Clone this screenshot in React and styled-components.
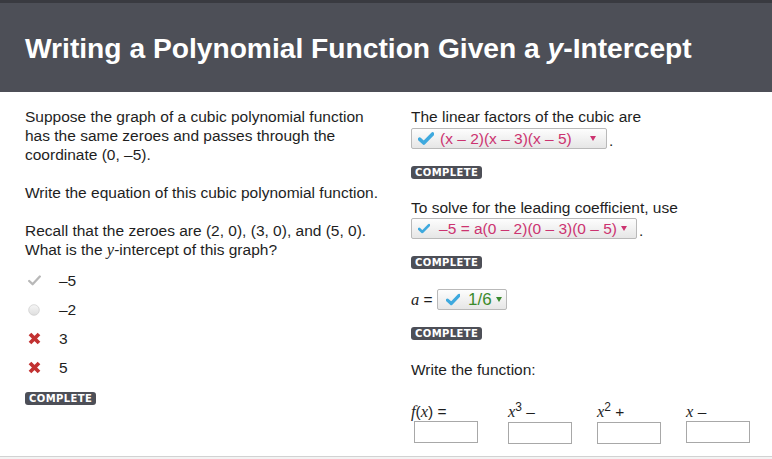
import React from "react";
import styled, { createGlobalStyle } from "styled-components";

const GlobalStyle = createGlobalStyle`
  html, body { margin: 0; padding: 0; background: #fff; }
  body { font-family: "Liberation Sans", Arial, sans-serif; color: #1e1e1e; }
  * { box-sizing: border-box; }
`;

const Page = styled.div`
  width: 772px;
  height: 459px;
  overflow: hidden;
  display: flex;
  flex-direction: column;
  background: #fff;
`;

const Header = styled.header`
  height: 92px;
  flex: none;
  border-top: 3px solid #393a40;
  background: #4d4f57;
  display: flex;
  align-items: center;
  padding-left: 25px;
`;

const Title = styled.h1`
  margin: 0;
  color: #fff;
  font: bold 28.2px/28px "Liberation Sans", Arial, sans-serif;
`;

const Main = styled.main`
  flex: 1;
  display: flex;
  font-size: 15.5px;
  line-height: 19px;
`;

const LeftCol = styled.section`
  width: 411px;
  flex: none;
  padding: 15px 0 0 25px;
`;

const RightCol = styled.section`
  flex: 1;
  padding: 15px 0 0 0;
`;

const Para = styled.p`
  margin: ${(p) => p.$top || 0}px 0 ${(p) => (p.$gap != null ? p.$gap : 19)}px 0;
`;

const MathVar = styled.i`
  font-family: "Liberation Serif", "Times New Roman", serif;
  font-size: 16.5px;
`;

const Options = styled.div`
  margin-top: 7px;
  display: flex;
  flex-direction: column;
`;

const OptionRow = styled.div`
  height: 29px;
  display: flex;
  align-items: center;
`;

const IconSlot = styled.span`
  width: 34px;
  padding-left: 3px;
  display: flex;
  align-items: center;
`;

const Badge = styled.div`
  display: inline-block;
  margin-top: ${(p) => p.$top || 0}px;
  height: 13px;
  padding: 0 4px;
  border-radius: 3px;
  background: #4d4f57;
  color: #fff;
  font: bold 10px/13px "DejaVu Sans", Verdana, sans-serif;
  letter-spacing: 0.4px;
`;

const Block = styled.div`
  margin-top: ${(p) => p.$top || 0}px;
`;

const DropRow = styled.div`
  margin-top: ${(p) => p.$top || 0}px;
  display: flex;
  align-items: flex-end;
`;

const Dropdown = styled.div`
  width: ${(p) => p.$width}px;
  height: 21px;
  display: flex;
  align-items: center;
  padding: 0 ${(p) => p.$padR || 8}px 0 ${(p) => p.$padL || 6}px;
  border: 1px solid #b9b9b9;
  border-radius: 2px;
  background: linear-gradient(#fdfdfd, #e6e6e6);
  color: ${(p) => p.$color};
  font-size: ${(p) => p.$fs || 15.5}px;
  line-height: 19px;
`;

const DropText = styled.span`
  flex: 1;
  margin-left: ${(p) => p.$gap || 7}px;
  white-space: nowrap;
`;

const Caret = styled.span`
  width: 0;
  height: 0;
  border-left: 3px solid transparent;
  border-right: 3px solid transparent;
  border-top: 5px solid ${(p) => p.$color};
  margin-left: 4px;
`;

const Dot = styled.span`
  margin-left: 2px;
  line-height: 17px;
`;

const Label = styled.span`
  margin-right: 4px;
  line-height: 21px;
`;

const FuncRow = styled.div`
  margin-top: 24px;
  display: flex;
`;

const FuncGroup = styled.div`
  width: ${(p) => p.$w}px;
  display: flex;
  flex-direction: column;
`;

const FuncLabel = styled.div`
  height: 17px;
  line-height: 17px;
  white-space: nowrap;
`;

const Sup = styled.sup`
  font-family: "Liberation Sans", Arial, sans-serif;
  font-size: 12px;
  line-height: 0;
`;

const AnswerBox = styled.div`
  margin-top: ${(p) => p.$top || 1}px;
  margin-left: ${(p) => p.$left || 0}px;
  width: 64px;
  height: 22px;
  border: 1px solid #a8a8a8;
  background: #fff;
`;

const Footer = styled.footer`
  height: 3px;
  flex: none;
  border-top: 1px solid #d2d2d2;
  background: #f3f3f3;
`;

const BlueCheck = ({ size = 16 }) => (
  <svg width={size} height={Math.round(size * 0.8)} viewBox="0 0 16 13">
    <path d="M1.6 7.2 L5.8 11 L14.6 2" fill="none" stroke="#3ea9de" strokeWidth="3.6" strokeLinejoin="round" strokeLinecap="round" />
  </svg>
);

const GrayCheck = () => (
  <svg width="13" height="11" viewBox="0 0 13 11">
    <path d="M1.2 6 L4.6 9.2 L11.8 1.5" fill="none" stroke="#b8b8b8" strokeWidth="2.3" strokeLinecap="round" strokeLinejoin="round" />
  </svg>
);

const Radio = () => (
  <svg width="12" height="12" viewBox="0 0 12 12">
    <defs>
      <linearGradient id="rg" x1="0" y1="0" x2="0" y2="1">
        <stop offset="0" stopColor="#f6f6f6" />
        <stop offset="1" stopColor="#dedede" />
      </linearGradient>
    </defs>
    <circle cx="6" cy="6" r="5.3" fill="url(#rg)" stroke="#d0d0d0" strokeWidth="0.8" />
  </svg>
);

const RedX = () => (
  <svg width="13" height="13" viewBox="0 0 13 13">
    <path d="M2 2 L11 11 M11 2 L2 11" stroke="#c23131" strokeWidth="3.8" strokeLinecap="butt" />
  </svg>
);

const PINK = "#cc3370";
const GREEN = "#3b8a2c";

export default function App() {
  return (
    <Page>
      <GlobalStyle />
      <Header>
        <Title>
          Writing a Polynomial Function Given a <i>y</i>-Intercept
        </Title>
      </Header>
      <Main>
        <LeftCol>
          <Para>
            Suppose the graph of a cubic polynomial function
            <br />
            has the same zeroes and passes through the
            <br />
            coordinate (0, –5).
          </Para>
          <Para>Write the equation of this cubic polynomial function.</Para>
          <Para $gap={0}>
            Recall that the zeroes are (2, 0), (3, 0), and (5, 0).
            <br />
            What is the <MathVar>y</MathVar>-intercept of this graph?
          </Para>
          <Options>
            <OptionRow>
              <IconSlot><GrayCheck /></IconSlot>–5
            </OptionRow>
            <OptionRow>
              <IconSlot><Radio /></IconSlot>–2
            </OptionRow>
            <OptionRow>
              <IconSlot><RedX /></IconSlot>3
            </OptionRow>
            <OptionRow>
              <IconSlot><RedX /></IconSlot>5
            </OptionRow>
          </Options>
          <Badge $top={10}>COMPLETE</Badge>
        </LeftCol>
        <RightCol>
          <Para $gap={0}>The linear factors of the cubic are</Para>
          <DropRow $top={2}>
            <Dropdown $width={196} $color={PINK} $padR={10}>
              <BlueCheck />
              <DropText $gap={6}>(x – 2)(x – 3)(x – 5)</DropText>
              <Caret $color={PINK} />
            </Dropdown>
            <Dot>.</Dot>
          </DropRow>
          <Badge $top={17}>COMPLETE</Badge>
          <Para $gap={0} $top={18}>
            To solve for the leading coefficient, use
          </Para>
          <DropRow $top={1}>
            <Dropdown $width={226} $color={PINK} $padR={9}>
              <BlueCheck />
              <DropText $gap={9}>–5 = a(0 – 2)(0 – 3)(0 – 5)</DropText>
              <Caret $color={PINK} />
            </Dropdown>
            <Dot>.</Dot>
          </DropRow>
          <Badge $top={17}>COMPLETE</Badge>
          <DropRow $top={19}>
            <Label>
              <MathVar>a</MathVar> =
            </Label>
            <Dropdown $width={70} $color={GREEN} $padL={8} $padR={4} $fs={17}>
              <BlueCheck size={16} />
              <DropText $gap={8}>1/6</DropText>
              <Caret $color={GREEN} />
            </Dropdown>
          </DropRow>
          <Badge $top={17}>COMPLETE</Badge>
          <Block $top={19}>Write the function:</Block>
          <FuncRow>
            <FuncGroup $w={97}>
              <FuncLabel>
                <MathVar>f</MathVar>(<MathVar>x</MathVar>) =
              </FuncLabel>
              <AnswerBox $left={3}>{""}</AnswerBox>
            </FuncGroup>
            <FuncGroup $w={89}>
              <FuncLabel>
                <MathVar>x</MathVar>
                <Sup>3</Sup> –
              </FuncLabel>
              <AnswerBox $top={2}>{""}</AnswerBox>
            </FuncGroup>
            <FuncGroup $w={89}>
              <FuncLabel>
                <MathVar>x</MathVar>
                <Sup>2</Sup> +
              </FuncLabel>
              <AnswerBox $top={2}>{""}</AnswerBox>
            </FuncGroup>
            <FuncGroup $w={89}>
              <FuncLabel>
                <MathVar>x</MathVar> –
              </FuncLabel>
              <AnswerBox>{""}</AnswerBox>
            </FuncGroup>
          </FuncRow>
        </RightCol>
      </Main>
      <Footer />
    </Page>
  );
}
